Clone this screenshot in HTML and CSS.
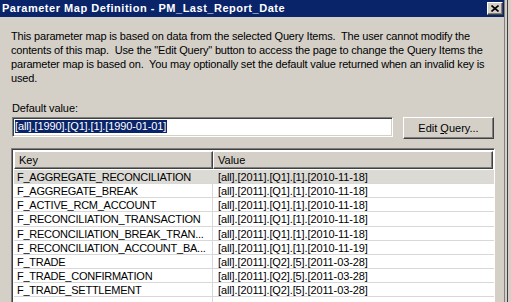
FILE: index.html
```html
<!DOCTYPE html>
<html>
<head>
<meta charset="utf-8">
<link rel="stylesheet" href="styles.css">
</head>
<body>
<div class="screen">
  <div class="dialog">
    <div class="titlebar">
      <span class="title">Parameter Map Definition - PM_Last_Report_Date</span>
      <span class="close"><svg width="8" height="7" viewBox="0 0 8 7"><path d="M0.5 0.5 L7.5 6.5 M7.5 0.5 L0.5 6.5" stroke="#000" stroke-width="1.6"/></svg></span>
    </div>
    <div class="content">
      <p class="intro">This parameter map is based on data from the selected Query Items.  The user cannot modify the
contents of this map.  Use the "Edit Query" button to access the page to change the Query Items the
parameter map is based on.  You may optionally set the default value returned when an invalid key is
used.</p>
      <div class="label">Default value:</div>
      <div class="field-row">
        <div class="input"><span class="sel">[all].[1990].[Q1].[1].[1990-01-01]</span></div>
        <div class="button"><span>Edit <u>Q</u>uery...</span></div>
      </div>
      <div class="list">
        <div class="header">
          <div class="hcell hkey">Key</div>
          <div class="hcell hval">Value</div>
        </div>
        <div class="row selected"><div class="key">F_AGGREGATE_RECONCILIATION</div><div class="val">[all].[2011].[Q1].[1].[2010-11-18]</div></div>
        <div class="row"><div class="key">F_AGGREGATE_BREAK</div><div class="val">[all].[2011].[Q1].[1].[2010-11-18]</div></div>
        <div class="row"><div class="key">F_ACTIVE_RCM_ACCOUNT</div><div class="val">[all].[2011].[Q1].[1].[2010-11-18]</div></div>
        <div class="row"><div class="key">F_RECONCILIATION_TRANSACTION</div><div class="val">[all].[2011].[Q1].[1].[2010-11-18]</div></div>
        <div class="row"><div class="key">F_RECONCILIATION_BREAK_TRAN...</div><div class="val">[all].[2011].[Q1].[1].[2010-11-18]</div></div>
        <div class="row"><div class="key">F_RECONCILIATION_ACCOUNT_BA...</div><div class="val">[all].[2011].[Q1].[1].[2010-11-19]</div></div>
        <div class="row"><div class="key">F_TRADE</div><div class="val">[all].[2011].[Q2].[5].[2011-03-28]</div></div>
        <div class="row"><div class="key">F_TRADE_CONFIRMATION</div><div class="val">[all].[2011].[Q2].[5].[2011-03-28]</div></div>
        <div class="row"><div class="key">F_TRADE_SETTLEMENT</div><div class="val">[all].[2011].[Q2].[5].[2011-03-28]</div></div>
        <div class="filler"><div class="key"></div><div class="val"></div></div>
      </div>
    </div>
  </div>
  <div class="edge"></div>
</div>
</body>
</html>
```

FILE: styles.css
```css
html, body {
  margin: 0;
  padding: 0;
  width: 511px;
  height: 302px;
  overflow: hidden;
  background: #D4D0C8;
}
body {
  font-family: "Liberation Sans", Arial, sans-serif;
  font-size: 11px;
  color: #000;
}
.screen {
  display: flex;
  height: 302px;
}
.dialog {
  width: 505px;
  border-right: 1px solid #808080;
  display: flex;
  flex-direction: column;
}
.edge {
  width: 5px;
  border-right: 1px solid #D4D0C8;
  background: linear-gradient(to right, #D4D0C8 0, #D4D0C8 2px, #404040 2px, #404040 3px, #D4D0C8 3px);
}
.titlebar {
  height: 17px;
  background: #0A246A;
  display: flex;
  align-items: center;
  justify-content: space-between;
  padding: 0 1px 0 2px;
}
.title {
  color: #fff;
  font-weight: bold;
  font-size: 11px;
  letter-spacing: 0.52px;
  line-height: 17px;
}
.close {
  width: 14px;
  height: 11px;
  background: #D4D0C8;
  border-top: 1px solid #fff;
  border-left: 1px solid #fff;
  border-right: 1px solid #404040;
  border-bottom: 1px solid #404040;
  box-shadow: inset -1px -1px 0 #808080;
  display: flex;
  align-items: center;
  justify-content: center;
}
.content {
  padding: 12px 0 0 11px;
  flex: 1;
  display: flex;
  flex-direction: column;
}
.intro {
  margin: 0;
  white-space: pre;
  line-height: 14px;
  letter-spacing: -0.17px;
}
.label {
  margin: 16px 0 0 1px;
  line-height: 14px;
  letter-spacing: -0.1px;
}
.field-row {
  display: flex;
  margin-top: 2px;
  margin-left: 1px;
}
.input {
  width: 377px;
  height: 16px;
  background: #fff;
  border-top: 1px solid #808080;
  border-left: 1px solid #808080;
  border-right: 1px solid #fff;
  border-bottom: 1px solid #fff;
  box-shadow: inset 1px 1px 0 #404040, inset -1px -1px 0 #D4D0C8;
  padding: 2px 0 0 2px;
}
.sel {
  display: inline-block;
  background: #0A246A;
  color: #fff;
  line-height: 13px;
  padding: 0 1px 0 0;
  letter-spacing: -0.12px;
}
.button {
  margin-left: 10px;
  width: 89px;
  height: 20px;
  border-top: 1px solid #fff;
  border-left: 1px solid #fff;
  border-right: 1px solid #404040;
  border-bottom: 1px solid #404040;
  box-shadow: inset -1px -1px 0 #808080;
  display: flex;
  align-items: center;
  justify-content: center;
}
.list {
  margin-top: 9px;
  width: 480px;
  flex: 1;
  background: #fff;
  border-top: 1px solid #808080;
  border-left: 1px solid #808080;
  border-right: 1px solid #fff;
  box-shadow: inset 1px 1px 0 #404040;
  padding: 2px 0 0 2px;
  display: flex;
  flex-direction: column;
}
.header {
  display: flex;
  height: 18px;
  margin-bottom: 1px;
}
.hcell {
  background: #D4D0C8;
  border-top: 1px solid #fff;
  border-left: 1px solid #fff;
  border-right: 1px solid #404040;
  border-bottom: 1px solid #404040;
  box-shadow: inset -1px -1px 0 #808080;
  line-height: 14px;
  padding: 1px 0 0 4px;
  box-sizing: border-box;
}
.hkey {
  width: 199px;
}
.hval {
  width: 280px;
}
.row {
  display: flex;
  height: 14.15px;
  box-sizing: border-box;
  border-bottom: 1px solid #D8D8D8;
  line-height: 13px;
}
.row.selected {
  background: #DCDAD5;
}
.key {
  width: 199px;
  box-sizing: border-box;
  border-right: 1px solid #D8D8D8;
  padding: 1px 0 0 3px;
  white-space: nowrap;
  overflow: hidden;
  letter-spacing: -0.25px;
}
.val {
  padding: 1px 0 0 5px;
  white-space: nowrap;
  letter-spacing: -0.12px;
}
.filler {
  flex: 1;
  display: flex;
}
```
